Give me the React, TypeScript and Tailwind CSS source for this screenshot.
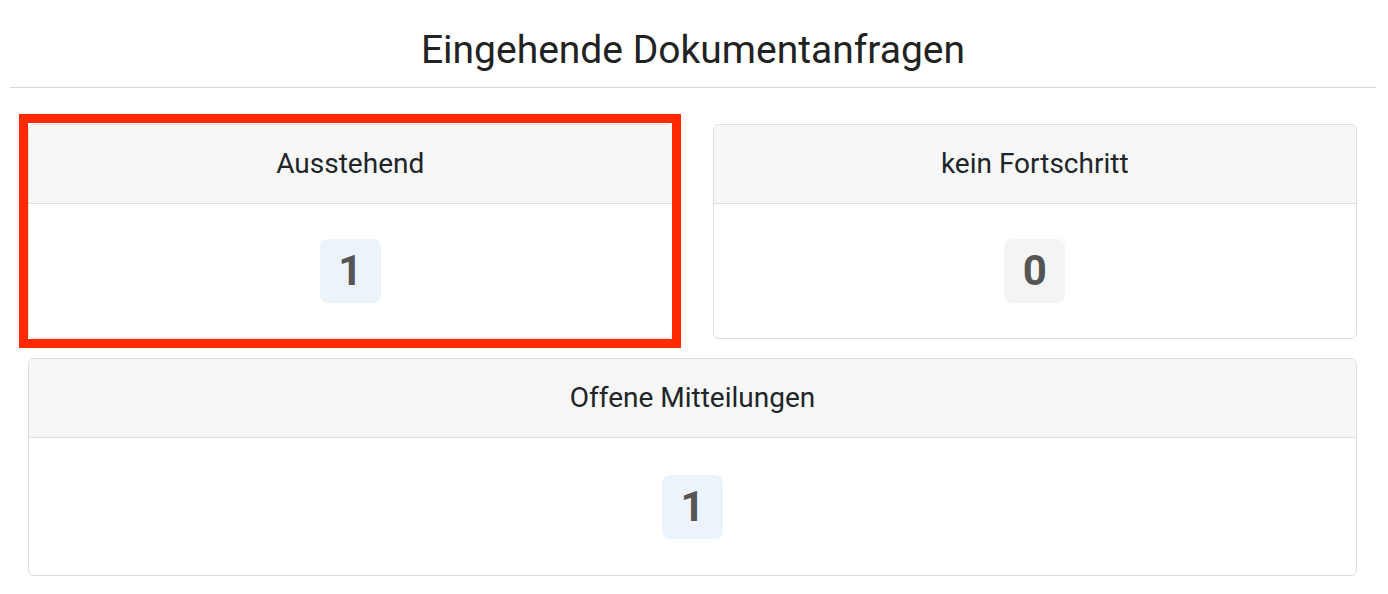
import React from "react";

function Card({
  title,
  value,
  badgeBg,
  bodyH,
  highlighted,
  className,
}: {
  title: string;
  value: string;
  badgeBg: string;
  bodyH: string;
  highlighted?: boolean;
  className?: string;
}) {
  return (
    <div className={"relative " + (className ?? "")}>
      <div className="overflow-hidden rounded-[6px] border border-[#dedede] bg-white">
        <div className="flex h-[79px] items-center justify-center border-b border-[#dedede] bg-[#f7f7f7] text-[28px] text-[#212529]">
          {title}
        </div>
        <div className={"flex items-center justify-center " + bodyH}>
          <span
            className={
              "flex h-[64px] w-[61px] items-center justify-center rounded-[8px] text-[42px] font-bold leading-none text-[#555555] " +
              badgeBg
            }
          >
            {value}
          </span>
        </div>
      </div>
      {highlighted && (
        <div className="pointer-events-none absolute -top-[10px] -bottom-[9px] -left-[9px] -right-[8px] border-[9px] border-[#ff2a00]" />
      )}
    </div>
  );
}

export default function App() {
  return (
    <div
      className="min-h-[594px] w-full bg-white"
      style={{ fontFamily: "Roboto, 'Noto Sans', sans-serif" }}
    >
      <div className="ml-[10px] mr-[12px] border-b border-[#d6d6d6] pt-[28px] pb-[14px] text-center text-[39px] leading-[45px] text-[#222222]">
        Eingehende Dokumentanfragen
      </div>
      <div className="grid grid-cols-2 gap-x-[40px] gap-y-[19px] pl-[28px] pr-[31px] pt-[36px]">
        <Card title="Ausstehend" value="1" badgeBg="bg-[#edf3fb]" bodyH="h-[134px]" highlighted />
        <Card title="kein Fortschritt" value="0" badgeBg="bg-[#f4f4f4]" bodyH="h-[134px]" />
        <Card
          className="col-span-2"
          title="Offene Mitteilungen"
          value="1"
          badgeBg="bg-[#edf3fb]"
          bodyH="h-[137px]"
        />
      </div>
    </div>
  );
}
